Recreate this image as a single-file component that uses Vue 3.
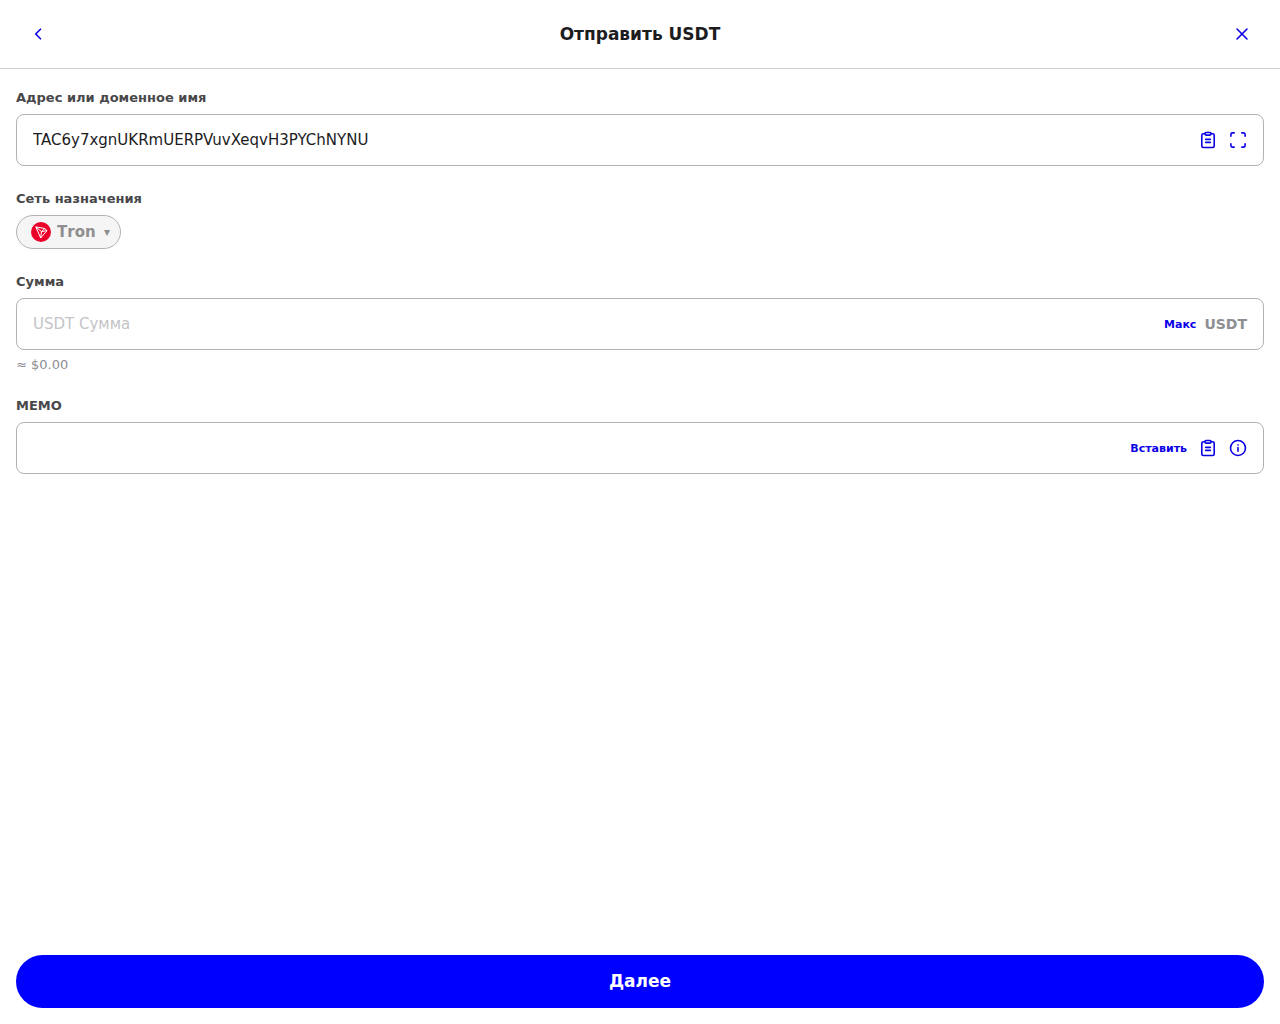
<script setup>
import { ref } from 'vue'

const address = ref('TAC6y7xgnUKRmUERPVuvXeqvH3PYChNYNU')
const amount = ref('')
const memo = ref('')
const network = ref('Tron')
</script>

<template>
  <div class="screen">
    <header class="header">
      <button class="nav-button" type="button" aria-label="Назад">
        <svg width="20" height="20" viewBox="0 0 20 20"><path d="M12.500 5.200 7.700 10l4.800 4.800" /></svg>
      </button>
      <h1 class="title">Отправить USDT</h1>
      <button class="nav-button" type="button" aria-label="Закрыть">
        <svg width="20" height="20" viewBox="0 0 20 20"><path d="m5 5 10 10m0-10L5 15" /></svg>
      </button>
    </header>

    <form class="form" @submit.prevent>
      <div class="group">
        <label class="label" for="address">Адрес или доменное имя</label>
        <div class="field">
          <input id="address" v-model="address" class="input" type="text" />
          <div class="icons">
            <button class="icon-button" type="button" aria-label="Вставить адрес">
              <svg width="18" height="18" viewBox="0 0 18 18">
                <path d="M6 2.800H4.300A1.500 1.500 0 0 0 2.800 4.300v10.700a1.500 1.500 0 0 0 1.500 1.500h9.400a1.500 1.500 0 0 0 1.500-1.500V4.300a1.500 1.500 0 0 0-1.500-1.500H12M6.700 8.400h4.600m-4.600 3h4.600" />
                <rect x="6" y="1.500" width="6" height="2.600" rx="1" />
              </svg>
            </button>
            <button class="icon-button" type="button" aria-label="Сканировать">
              <svg width="18" height="18" viewBox="0 0 18 18">
                <path d="M1.900 5.200V3.400a1.500 1.500 0 0 1 1.500-1.500h1.800m7.600 0h1.800a1.500 1.500 0 0 1 1.500 1.500v1.800m0 7.600v1.800a1.500 1.500 0 0 1-1.500 1.500h-1.800m-7.600 0H3.400a1.500 1.500 0 0 1-1.500-1.500v-1.800" />
              </svg>
            </button>
          </div>
        </div>
      </div>

      <div class="group">
        <label class="label" for="network">Сеть назначения</label>
        <div class="chip">
          <svg class="coin" width="20" height="20" viewBox="0 0 20 20">
            <circle class="coin-disc" cx="10" cy="10" r="10" />
            <path class="coin-mark" d="m4.800 4.900 9 1.600 2.200 2.100L9.700 16zM4.800 4.900l5.700 4.700L9.700 16m.8-6.400 3.300-3.100m-3.300 3.100 5.500-1" />
          </svg>
          <select id="network" v-model="network" class="select" disabled>
            <option>Tron</option>
          </select>
          <span class="caret" aria-hidden="true">▾</span>
        </div>
      </div>

      <div class="group">
        <label class="label" for="amount">Сумма</label>
        <div class="field">
          <input id="amount" v-model="amount" class="input" type="text" inputmode="decimal" placeholder="USDT Сумма" />
          <button class="text-button" type="button">Макс</button>
          <span class="unit">USDT</span>
        </div>
        <p class="hint">≈ $0.00</p>
      </div>

      <div class="group">
        <label class="label" for="memo">MEMO</label>
        <div class="field">
          <input id="memo" v-model="memo" class="input" type="text" />
          <div class="icons">
            <button class="text-button" type="button">Вставить</button>
            <button class="icon-button" type="button" aria-label="Вставить MEMO">
              <svg width="18" height="18" viewBox="0 0 18 18">
                <path d="M6 2.800H4.300A1.500 1.500 0 0 0 2.800 4.300v10.700a1.500 1.500 0 0 0 1.500 1.500h9.400a1.500 1.500 0 0 0 1.500-1.500V4.300a1.500 1.500 0 0 0-1.500-1.500H12M6.700 8.400h4.600m-4.600 3h4.600" />
                <rect x="6" y="1.500" width="6" height="2.600" rx="1" />
              </svg>
            </button>
            <button class="icon-button" type="button" aria-label="Что такое MEMO">
              <svg width="18" height="18" viewBox="0 0 18 18">
                <circle cx="9" cy="9" r="7.500" />
                <path d="M9 8.600v3.600M9 5.900v.1" />
              </svg>
            </button>
          </div>
        </div>
      </div>

      <button class="submit" type="submit">Далее</button>
    </form>
  </div>
</template>

<style>
body {
  margin: 0;
  background: #fff;
}
</style>

<style scoped>
.screen {
  display: flex;
  flex-direction: column;
  min-height: 100vh;
  color: #1c1c1e;
  font-family: "DejaVu Sans", sans-serif;
}

button,
input,
select {
  padding: 0;
  border: 0;
  background: none;
  font-family: inherit;
}

button {
  cursor: pointer;
}

.header {
  display: flex;
  align-items: center;
  justify-content: space-between;
  padding: 12px 16px;
  border-bottom: 1px solid #d1d1d1;
}

.title {
  margin: 0;
  font-size: 17px;
  line-height: 20px;
}

.nav-button {
  display: flex;
  align-items: center;
  justify-content: center;
  width: 44px;
  height: 44px;
}

.nav-button svg,
.icon-button svg {
  display: block;
  fill: none;
  stroke: #0a00e6;
  stroke-width: 1.6;
  stroke-linecap: round;
  stroke-linejoin: round;
}

.form {
  display: flex;
  flex: 1;
  flex-direction: column;
  gap: 24px;
  padding: 20px 16px 16px;
}

.group {
  display: flex;
  flex-direction: column;
  align-items: flex-start;
}

.label {
  margin-bottom: 8px;
  color: #48484a;
  font-size: 13px;
  font-weight: 700;
  line-height: 17px;
}

.field {
  display: flex;
  align-items: center;
  gap: 8px;
  box-sizing: border-box;
  width: 100%;
  height: 52px;
  padding: 0 16px;
  border: 1px solid #b3b3b3;
  border-radius: 8px;
}

.input {
  flex: 1;
  min-width: 0;
  height: 100%;
  outline: none;
  color: #1c1c1e;
  font-size: 15px;
}

.input::placeholder {
  color: #c4c4c6;
}

.icons {
  display: flex;
  align-items: center;
  gap: 12px;
}

.text-button {
  color: #0a00e6;
  font-size: 11px;
  font-weight: 700;
}

.unit {
  color: #8e8e93;
  font-size: 14px;
  font-weight: 700;
}

.chip {
  display: flex;
  align-items: center;
  box-sizing: border-box;
  height: 34px;
  padding: 0 10px 0 14px;
  border: 1px solid #b3b3b3;
  border-radius: 17px;
  background: #f5f5f5;
  color: #8e8e90;
}

.coin-disc {
  fill: #eb0029;
}

.coin-mark {
  fill: none;
  stroke: #fff;
  stroke-linejoin: round;
}

.select {
  margin: 0 8px 0 6px;
  appearance: none;
  color: inherit;
  font-size: 15px;
  font-weight: 700;
  font-kerning: none;
  opacity: 1;
}

.caret {
  font-size: 12px;
}

.hint {
  margin: 6px 0 0;
  color: #8e8e93;
  font-size: 13px;
  line-height: 17px;
}

.submit {
  margin-top: auto;
  padding: 16px;
  border-radius: 27px;
  background: #00f;
  color: #fff;
  font-size: 17px;
  font-weight: 700;
  line-height: 21px;
}
</style>
